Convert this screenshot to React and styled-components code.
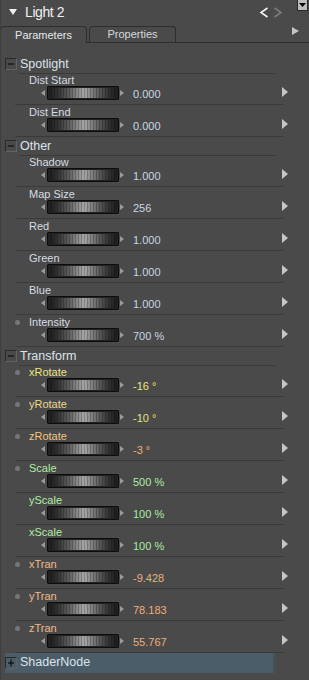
import React from "react";
import styled, { createGlobalStyle, css } from "styled-components";

const GlobalStyle = createGlobalStyle`
  html, body {
    margin: 0;
    padding: 0;
    background: #4a4a4a;
  }
  body {
    font-family: "Liberation Sans", Arial, sans-serif;
  }
`;

const tones = {
  plain: { label: "#d6dce2", value: "#c9d6e2" },
  yellow: { label: "#ece57e", value: "#ece57a" },
  amber: { label: "#ecd88a", value: "#e4e27e" },
  orange: { label: "#f2c47c", value: "#f2b070" },
  green: { label: "#aeeea2", value: "#a8eea0" },
  peach: { label: "#f2b886", value: "#f2aa78" },
};

const sections = [
  {
    title: "Spotlight",
    rows: [
      { label: "Dist Start", value: "0.000" },
      { label: "Dist End", value: "0.000" },
    ],
  },
  {
    title: "Other",
    rows: [
      { label: "Shadow", value: "1.000" },
      { label: "Map Size", value: "256" },
      { label: "Red", value: "1.000" },
      { label: "Green", value: "1.000" },
      { label: "Blue", value: "1.000" },
      { label: "Intensity", value: "700 %", dot: true },
    ],
  },
  {
    title: "Transform",
    rows: [
      { label: "xRotate", value: "-16 °", dot: true, tone: "yellow" },
      { label: "yRotate", value: "-10 °", dot: true, tone: "amber" },
      { label: "zRotate", value: "-3 °", dot: true, tone: "orange" },
      { label: "Scale", value: "500 %", dot: true, tone: "green" },
      { label: "yScale", value: "100 %", tone: "green" },
      { label: "xScale", value: "100 %", tone: "green" },
      { label: "xTran", value: "-9.428", dot: true, tone: "peach" },
      { label: "yTran", value: "78.183", dot: true, tone: "peach" },
      { label: "zTran", value: "55.767", dot: true, tone: "peach" },
    ],
  },
  { title: "ShaderNode", closed: true, rows: [] },
];

const App = () => {
  return (
    <>
      <GlobalStyle />
      <Panel>
        <TitleBar>
          <Collapse />
          <Title>Light 2</Title>
          <Nav>
            <svg width="10" height="11" viewBox="0 0 10 11">
              <path d="M8.5 1 L2 5.5 L8.5 10" fill="none" stroke="#f2f2f2" strokeWidth="1.6" />
            </svg>
            <svg width="10" height="11" viewBox="0 0 10 11">
              <path d="M1.5 1 L8 5.5 L1.5 10" fill="none" stroke="#7c7c7c" strokeWidth="1.6" />
            </svg>
          </Nav>
          <MenuButton>
            <svg width="7" height="4" viewBox="0 0 7 4">
              <path d="M0 0 H7 L3.5 4 Z" fill="#000" />
            </svg>
          </MenuButton>
        </TitleBar>

        <TabBar>
          <Tab $active>Parameters</Tab>
          <Tab>Properties</Tab>
          <TabArrow />
        </TabBar>

        <Content>
          {sections.map((section) => (
            <Section key={section.title}>
              <Header $closed={section.closed}>
                <ToggleBox>
                  <svg width="10" height="10" viewBox="0 0 10 10">
                    <path d="M2 5 H8" stroke="#000" strokeWidth="1" />
                    {section.closed && <path d="M5 1.5 V8.5" stroke="#000" strokeWidth="1" />}
                  </svg>
                </ToggleBox>
                <HeaderText>{section.title}</HeaderText>
              </Header>
              {section.rows.map((row) => {
                const tone = tones[row.tone || "plain"];
                return (
                  <Row key={row.label}>
                    <LabelLine>
                      {row.dot && <Dot />}
                      <Label $color={tone.label}>{row.label}</Label>
                    </LabelLine>
                    <Control>
                      <Nudge $dir="left" />
                      <Dial />
                      <Nudge $dir="right" />
                      <Value $color={tone.value}>{row.value}</Value>
                      <PlayArrow />
                    </Control>
                  </Row>
                );
              })}
            </Section>
          ))}
        </Content>
      </Panel>
    </>
  );
};

const Panel = styled.div`
  width: 309px;
  height: 680px;
  overflow: hidden;
  background: #4a4a4a;
  box-sizing: border-box;
  border-left: 1px solid #3e3e3e;
`;

const TitleBar = styled.div`
  height: 25px;
  display: flex;
  align-items: flex-start;
  position: relative;
`;

const Collapse = styled.span`
  width: 0;
  height: 0;
  margin: 9px 0 0 8px;
  border-left: 4px solid transparent;
  border-right: 4px solid transparent;
  border-top: 6px solid #f0f0f0;
`;

const Title = styled.span`
  margin: 4px 0 0 8px;
  font-size: 14px;
  letter-spacing: -0.4px;
  line-height: 17px;
  color: #f0f0f0;
`;

const Nav = styled.div`
  margin: 7px 0 0 auto;
  display: flex;
  gap: 4px;
`;

const MenuButton = styled.div`
  width: 9px;
  height: 10px;
  margin: 0 1px 0 14px;
  background: #bdbdbd;
  border: 1px solid #2a2a2a;
  border-top: none;
  display: flex;
  align-items: center;
  justify-content: center;
`;

const TabBar = styled.div`
  height: 17px;
  display: flex;
  align-items: flex-end;
  gap: 2px;
  border-bottom: 1px solid #2e2e2e;
  position: relative;
`;

const Tab = styled.div`
  width: 85px;
  height: 15px;
  border: 1px solid #2e2e2e;
  border-bottom: none;
  border-radius: 4px 4px 0 0;
  font-size: 11px;
  line-height: 15px;
  text-align: center;
  color: #d4d8dc;
  ${(p) =>
    p.$active &&
    css`
      margin-left: -1px;
      height: 16px;
      margin-bottom: -1px;
      background: #4a4a4a;
      color: #e4e8ec;
      line-height: 16px;
    `}
`;

const TabArrow = styled.span`
  position: absolute;
  right: 10px;
  top: 2px;
  width: 0;
  height: 0;
  border-left: 7px solid #c4c4c4;
  border-top: 4.5px solid transparent;
  border-bottom: 4.5px solid transparent;
`;

const Content = styled.div`
  padding-top: 12px;
`;

const Section = styled.div`
  display: flex;
  flex-direction: column;
`;

const Header = styled.div`
  height: 19px;
  display: flex;
  align-items: center;
  position: relative;
  box-sizing: border-box;
  padding: 0 0 1px 4px;
  &::after {
    content: "";
    position: absolute;
    left: 18px;
    right: 34px;
    bottom: 0;
    height: 1px;
    background: #3a3a3a;
  }
  ${(p) =>
    p.$closed &&
    css`
      height: 20px;
      margin-left: 4px;
      width: 270px;
      padding-left: 0;
      background: #4b5d69;
      border-right: 2px solid #42525c;
      &::after {
        display: none;
      }
    `}
`;

const ToggleBox = styled.span`
  width: 10px;
  height: 10px;
  border: 1px solid #2a2a2a;
  border-right-color: #626262;
  border-bottom-color: #626262;
  display: flex;
  align-items: center;
  justify-content: center;
`;

const HeaderText = styled.span`
  margin-left: 3px;
  font-size: 12.5px;
  line-height: 15px;
  color: #dce3ea;
`;

const Row = styled.div`
  height: 32px;
  box-sizing: border-box;
  padding-top: 1px;
  position: relative;
  &::after {
    content: "";
    position: absolute;
    left: 14px;
    right: 26px;
    bottom: 0;
    height: 1px;
    background: #3a3a3a;
  }
  ${Header} + & {
    height: 31px;
    padding-top: 0;
  }
`;

const LabelLine = styled.div`
  height: 12px;
  display: flex;
  align-items: center;
  padding-left: 28px;
  position: relative;
`;

const Dot = styled.span`
  position: absolute;
  left: 14px;
  top: 4px;
  width: 5px;
  height: 5px;
  border-radius: 50%;
  background: #767676;
`;

const Label = styled.span`
  font-size: 11px;
  line-height: 12px;
  color: ${(p) => p.$color};
`;

const Control = styled.div`
  height: 14px;
  display: flex;
  align-items: center;
  padding: 0 21px 0 40px;
`;

const Nudge = styled.span`
  width: 0;
  height: 0;
  border-top: 3.5px solid transparent;
  border-bottom: 3.5px solid transparent;
  ${(p) =>
    p.$dir === "left"
      ? css`
          border-right: 4px solid #9c9c9c;
          margin-right: 2px;
        `
      : css`
          border-left: 4px solid #9c9c9c;
          margin-left: 1px;
        `}
`;

const Dial = styled.span`
  width: 72px;
  height: 14px;
  box-sizing: border-box;
  border: 1px solid #0c0c0c;
  border-radius: 1px;
  box-shadow: inset 0 0 0 1px #222;
  background:
    repeating-linear-gradient(
      90deg,
      rgba(0, 0, 0, 0.22) 0 1px,
      transparent 1px 3px
    ),
    linear-gradient(
      90deg,
      #1a1a1a 0%,
      #333 14%,
      #5e5e5e 30%,
      #909090 44%,
      #a8a8a8 52%,
      #8a8a8a 60%,
      #585858 74%,
      #303030 88%,
      #1a1a1a 100%
    );
`;

const Value = styled.span`
  flex: 1;
  margin-left: 9px;
  padding-top: 2px;
  font-size: 11px;
  line-height: 12px;
  color: ${(p) => p.$color};
`;

const PlayArrow = styled.span`
  width: 0;
  height: 0;
  margin-top: -3px;
  border-left: 6px solid #c6c6c6;
  border-top: 5px solid transparent;
  border-bottom: 5px solid transparent;
`;

export default App;
